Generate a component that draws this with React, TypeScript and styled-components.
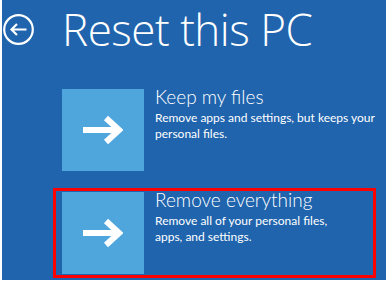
import React from 'react';
import styled, { createGlobalStyle } from 'styled-components';

const Global = createGlobalStyle`
    html, body {
        margin: 0;
        padding: 0;
        background: #ffffff;
    }
    * {
        box-sizing: border-box;
    }
`;

const Screen = styled.div`
    width: 384px;
    height: 280px;
    margin-left: 2px;
    background: #1f64ad;
    color: #ffffff;
    font-family: "Open Sans", "Noto Sans", sans-serif;
    overflow: hidden;
`;

const Header = styled.div`
    display: flex;
    align-items: center;
    padding: 1px 0 0 1px;
    height: 56px;
    gap: 28px;
`;

const BackButton = styled.div`
    width: 31px;
    height: 31px;
    display: flex;
    align-items: center;
    justify-content: center;
    margin-top: 2px;
`;

const Title = styled.h1`
    margin: 0;
    font-size: 44px;
    font-weight: 300;
    line-height: 44px;
    letter-spacing: -0.5px;
`;

const Options = styled.div`
    display: flex;
    flex-direction: column;
    gap: 13px;
    padding: 29px 0 0 51px;
`;

const Option = styled.div<{ $selected?: boolean }>`
    display: flex;
    width: 323px;
    height: 90px;
    padding: 1px 6px;
    gap: 11px;
    border: 3px solid ${(p) => (p.$selected ? '#ff0000' : 'transparent')};
`;

const Tile = styled.div`
    width: 82px;
    height: 82px;
    flex-shrink: 0;
    background: #4fa6dd;
    display: flex;
    align-items: center;
    justify-content: center;
`;

const Text = styled.div`
    display: flex;
    flex-direction: column;
    font-family: Lato, "Open Sans", sans-serif;
    white-space: nowrap;
`;

const OptionTitle = styled.div`
    font-size: 19px;
    font-weight: 300;
    line-height: 22px;
    margin-top: -3px;
    margin-bottom: 2px;
`;

const Desc = styled.div`
    font-size: 12px;
    line-height: 15.5px;
`;

const BackIcon = () => (
    <svg width="31" height="31" viewBox="0 0 31 31">
        <circle cx="15.5" cy="15.5" r="14.3" fill="none" stroke="#fff" strokeWidth="2.2" />
        <path d="M8.5 15.5 H23.5 M14 10 L8.5 15.5 L14 21" fill="none" stroke="#fff" strokeWidth="2.2" />
    </svg>
);

const ArrowIcon = () => (
    <svg width="40" height="30" viewBox="0 0 40 30">
        <path d="M0 15 H35" stroke="#fff" strokeWidth="6" />
        <path d="M23 3 L36 15 L23 27" fill="none" stroke="#fff" strokeWidth="6" strokeLinejoin="miter" />
    </svg>
);

const items = [
    { title: 'Keep my files', desc: ['Remove apps and settings, but keeps your', 'personal files.'] },
    { title: 'Remove everything', desc: ['Remove all of your personal files,', 'apps, and settings.'], selected: true },
];

export default function App() {
    return (
        <>
            <Global />
            <Screen>
                <Header>
                    <BackButton>
                        <BackIcon />
                    </BackButton>
                    <Title>Reset this PC</Title>
                </Header>
                <Options>
                    {items.map((it) => (
                        <Option key={it.title} $selected={it.selected}>
                            <Tile>
                                <ArrowIcon />
                            </Tile>
                            <Text>
                                <OptionTitle>{it.title}</OptionTitle>
                                {it.desc.map((d) => (
                                    <Desc key={d}>{d}</Desc>
                                ))}
                            </Text>
                        </Option>
                    ))}
                </Options>
            </Screen>
        </>
    );
}
